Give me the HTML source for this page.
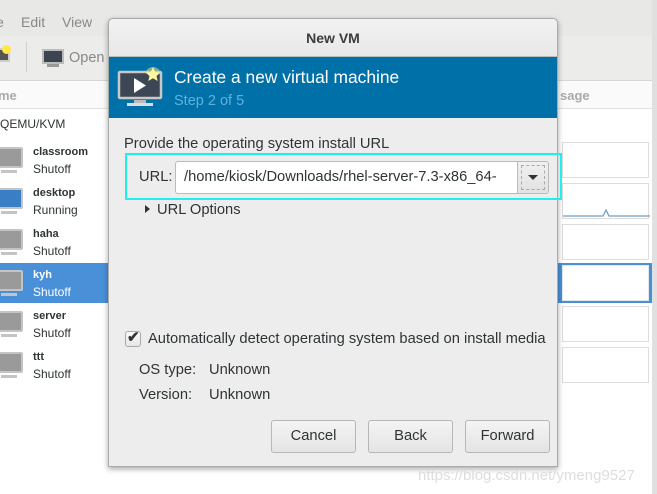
<!DOCTYPE html>
<html><head><style>
*{margin:0;padding:0;box-sizing:border-box}
body{width:657px;height:494px;overflow:hidden;background:#fff;font-family:"Liberation Sans",sans-serif;position:relative;color:#2e3436}
.abs{position:absolute}
.t{font-size:14.7px}
.mon{position:absolute;width:28px;height:21px;border:2px solid #c4c4c4;background:#9a9a9a;border-radius:2px}
.mon:after{content:"";position:absolute;left:4px;top:21px;width:16px;height:3px;background:#c4c4c4}
.name{position:absolute;left:33px;font-size:11px;font-weight:bold;color:#2e3436}
.st{position:absolute;left:33px;font-size:12px;color:#2e3436}
.gr{position:absolute;left:562px;width:87px;height:36px;border:1px solid #ddd;background:#fff}
.btn{position:absolute;top:420px;width:85px;height:33px;border:1px solid #b6b6b3;border-radius:3px;background:linear-gradient(#f4f4f4,#e4e4e4);font-size:14.7px;text-align:center;line-height:31px;color:#2e3436}
</style></head><body>
<div class="abs" style="left:0;top:0;width:657px;height:36px;background:#e8e8e7"></div>
<div class="abs" style="left:-4px;top:14px;font-size:14px;color:#888">e</div>
<div class="abs" style="left:21px;top:14px;font-size:14px;color:#888">Edit</div>
<div class="abs" style="left:62px;top:14px;font-size:14px;color:#888">View</div>
<div class="abs" style="left:0;top:36px;width:657px;height:45px;background:#ececeb;border-bottom:1px solid #d6d6d6"></div>
<div class="abs" style="left:-6px;top:48px;width:16px;height:14px;background:#555;border:2px solid #ccc"></div>
<div class="abs" style="left:2px;top:45px;width:9px;height:9px;background:#ffe64d;border-radius:50%"></div>
<div class="abs" style="left:26px;top:42px;width:1px;height:30px;background:#d0d0d0"></div>
<div class="abs" style="left:42px;top:49px;width:22px;height:15px;background:#3c4450;border:2px solid #bbb"></div>
<div class="abs" style="left:47px;top:64px;width:12px;height:3px;background:#999"></div>
<div class="abs" style="left:69px;top:50px;font-size:14.5px;color:#888">Open</div>
<div class="abs" style="left:0;top:81px;width:652px;height:28px;background:#fafafa;border-bottom:1px solid #e0e0e0"></div>
<div class="abs" style="left:-2px;top:88px;font-size:13px;color:#aaa;font-weight:bold">me</div>
<div class="abs" style="left:560px;top:88px;font-size:13px;color:#aaa;font-weight:bold">sage</div>
<div class="abs" style="left:652px;top:0;width:5px;height:494px;background:#e0e0e0"></div>
<div class="abs" style="left:0;top:117px;font-size:12px;color:#2e3436">QEMU/KVM</div>
<div class="abs" style="left:0;top:263px;width:652px;height:40px;background:#4a90d9"></div>

<div class="mon" style="left:-5px;top:147px"></div><div class="name" style="top:146px">classroom</div><div class="st" style="top:162px">Shutoff</div>
<div class="mon" style="left:-5px;top:188px;background:#3a7fc5"></div><div class="name" style="top:187px">desktop</div><div class="st" style="top:203px">Running</div>
<div class="mon" style="left:-5px;top:229px"></div><div class="name" style="top:228px">haha</div><div class="st" style="top:244px">Shutoff</div>
<div class="mon" style="left:-5px;top:270px"></div><div class="name" style="top:269px;color:#fff">kyh</div><div class="st" style="top:285px;color:#fff">Shutoff</div>
<div class="mon" style="left:-5px;top:311px"></div><div class="name" style="top:310px">server</div><div class="st" style="top:326px">Shutoff</div>
<div class="mon" style="left:-5px;top:352px"></div><div class="name" style="top:351px">ttt</div><div class="st" style="top:367px">Shutoff</div>

<div class="gr" style="top:142px"></div>
<div class="gr" style="top:183px"><svg width="87" height="36" class="abs" style="left:0;top:0"><polyline points="0,32 40,32 43,26 46,32 87,32" fill="none" stroke="#6a9fc5" stroke-width="1.2"/></svg></div>
<div class="gr" style="top:224px"></div>
<div class="gr" style="top:265px;border-color:#e0e8f0"></div>
<div class="gr" style="top:306px"></div>
<div class="gr" style="top:347px"></div>

<div class="abs" style="left:108px;top:18px;width:450px;height:449px;background:#ededed;border:1px solid #aaa;border-radius:5px 5px 0 0;box-shadow:0 2px 6px rgba(0,0,0,.35)"></div>
<div class="abs" style="left:109px;top:19px;width:448px;height:38px;background:linear-gradient(#f2f2f2,#e8e8e8);border-radius:5px 5px 0 0;border-bottom:1px solid #bbb;text-align:center;line-height:38px;font-size:14px;font-weight:bold;color:#3b3b3b">New VM</div>
<div class="abs" style="left:109px;top:57px;width:448px;height:61px;background:#0071a8"></div>
<svg class="abs" style="left:117px;top:62px" width="50" height="46">
<circle cx="36" cy="13" r="8" fill="#ffec6e" opacity=".5"/>
<rect x="2" y="10" width="42" height="26" rx="1" fill="#3c4654" stroke="#c8c8c8" stroke-width="2.5"/>
<path d="M17 16 L17 31 L29 23.5Z" fill="#fff"/>
<rect x="17" y="38" width="12" height="3" fill="#bbb"/><rect x="10" y="41" width="26" height="3" fill="#ddd"/>
<path d="M36 5 L38.2 10 L43.5 10.5 L39.5 14 L40.7 19 L36 16.3 L31.3 19 L32.5 14 L28.5 10.5 L33.8 10Z" fill="#fff7a0"/>
</svg>
<div class="abs" style="left:174px;top:67px;font-size:17.4px;color:#fff">Create a new virtual machine</div>
<div class="abs" style="left:174px;top:93px;font-size:14.5px;color:#5fb0dc">Step 2 of 5</div>

<div class="abs t" style="left:124px;top:136px">Provide the operating system install URL</div>
<div class="abs" style="left:125px;top:153px;width:437px;height:47px;border:2px solid #1ef0f0"></div>
<div class="abs t" style="left:139px;top:169px">URL:</div>
<div class="abs t" style="left:175px;top:161px;width:345px;height:33px;background:#fff;border:1px solid #bbb;border-radius:3px 0 0 3px;line-height:31px;padding-left:8px;overflow:hidden;white-space:nowrap">/home/kiosk/Downloads/rhel-server-7.3-x86_64-</div>
<div class="abs" style="left:517px;top:161px;width:32px;height:33px;background:linear-gradient(#f0f0f0,#e2e2e2);border:1px solid #bbb;border-radius:0 3px 3px 0"><div class="abs" style="left:3px;top:3px;width:24px;height:25px;border:1px dashed #aaa"></div><div class="abs" style="left:10px;top:13px;border-left:5px solid transparent;border-right:5px solid transparent;border-top:5px solid #333"></div></div>
<div class="abs" style="left:145px;top:205px;border-top:4px solid transparent;border-bottom:4px solid transparent;border-left:5px solid #333"></div>
<div class="abs t" style="left:157px;top:202px">URL Options</div>

<div class="abs" style="left:125px;top:331px;width:16px;height:16px;border:1px solid #aaa;border-radius:3px;background:linear-gradient(#fafafa,#e6e6e6)"></div>
<div class="abs" style="left:127px;top:328px;font-size:15px;font-weight:bold;color:#333">✔</div>
<div class="abs t" style="left:148px;top:331px">Automatically detect operating system based on install media</div>
<div class="abs t" style="left:139px;top:362px">OS type:</div>
<div class="abs t" style="left:209px;top:362px">Unknown</div>
<div class="abs t" style="left:139px;top:387px">Version:</div>
<div class="abs t" style="left:209px;top:387px">Unknown</div>
<div class="btn" style="left:271px">Cancel</div>
<div class="btn" style="left:368px">Back</div>
<div class="btn" style="left:465px">Forward</div>
<div class="abs" style="left:418px;top:467px;font-size:15px;color:#ddd">https://blog.csdn.net/ymeng9527</div>
</body></html>
